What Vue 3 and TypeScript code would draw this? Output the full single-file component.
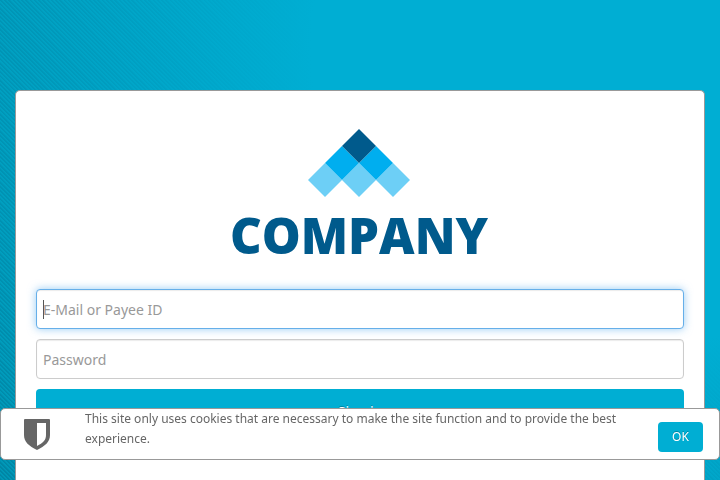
<script setup lang="ts">
import { onMounted, ref } from 'vue'

const account = ref('')
const password = ref('')
const noticeOpen = ref(true)
const accountField = ref<HTMLInputElement | null>(null)

onMounted(() => accountField.value?.focus())
</script>

<template>
  <div class="page">
    <main class="card">
      <div class="brand">
        <svg class="mark" viewBox="0 0 102 68" aria-hidden="true">
          <path fill="#6dcff6" d="M17 34l17 17-17 17L0 51zM51 34l17 17-17 17-17-17zM85 34l17 17-17 17-17-17z" />
          <path fill="#00aeef" d="M34 17l17 17-17 17-17-17zM68 17l17 17-17 17-17-17z" />
          <path fill="#005a8c" d="M51 0l17 17-17 17-17-17z" />
        </svg>
        <span class="name">COMPANY</span>
      </div>
      <form class="form" @submit.prevent>
        <input ref="accountField" v-model="account" class="field" type="text" aria-label="E-Mail or Payee ID" placeholder="E-Mail or Payee ID" />
        <input v-model="password" class="field" type="password" aria-label="Password" placeholder="Password" />
        <button class="button submit" type="submit">Sign in</button>
      </form>
    </main>
    <aside v-if="noticeOpen" class="notice">
      <svg class="shield" viewBox="0 0 26 31" aria-hidden="true">
        <path fill="#666" fill-rule="evenodd" d="M1 0h24q1 0 1 1v15c0 7-5 11-13 15C5 27 0 23 0 16V1q0-1 1-1zM13 4v23c6-3 9-6 9-11V4z" />
      </svg>
      <p class="message">This site only uses cookies that are necessary to make the site function and to provide the best experience.</p>
      <button class="button accept" type="button" @click="noticeOpen = false">OK</button>
    </aside>
  </div>
</template>

<style>
body {
  margin: 0;
  overflow: hidden;
}
</style>

<style scoped>
.page {
  box-sizing: border-box;
  min-height: 100vh;
  padding: 90px 15px 0;
  display: flex;
  font-family: "Noto Sans", "Open Sans", sans-serif;
  color: #666;
  background:
    radial-gradient(ellipse 130% 170% at 90% 10%, #00aed3 36%, rgba(0, 174, 211, 0) 100%),
    repeating-linear-gradient(45deg, #007b98 0 1px, #0092b0 2px 3px);
}

.card {
  box-sizing: border-box;
  flex: 1;
  padding: 38px 20px 20px;
  border: 1px solid #999;
  border-bottom: 0;
  border-radius: 5px 5px 0 0;
  background: #fff;
}

.brand {
  display: flex;
  flex-direction: column;
  align-items: center;
  height: 160px;
  padding-right: 2px;
}

.mark {
  width: 102px;
  height: 68px;
}

.name {
  margin-top: 8px;
  font: 800 49px/60px "Open Sans", sans-serif;
  color: #005a8c;
}

.form {
  display: flex;
  flex-direction: column;
  gap: 10px;
}

.field {
  box-sizing: border-box;
  width: 100%;
  height: 40px;
  padding: 6px;
  border: 1px solid #ccc;
  border-radius: 4px;
  outline: 0;
  font: 14px/20px "Noto Sans", sans-serif;
  color: #555;
  background: #fff;
  box-shadow: inset 0 1px 1px rgba(0, 0, 0, 0.08);
}

.field::placeholder {
  color: #999;
  opacity: 1;
}

.field:focus {
  border-color: #66afe9;
  box-shadow: inset 0 1px 1px rgba(0, 0, 0, 0.08), 0 0 8px rgba(82, 168, 236, 0.6);
}

/* Steady caret while the focused field is empty */
.field:focus:placeholder-shown {
  caret-color: transparent;
  background: linear-gradient(#555, #555) 6px 10px / 1px 19px no-repeat #fff;
}

.button {
  border: 0;
  border-radius: 4px;
  color: #fff;
  background: #00aed3;
  font: 12px/20px "Noto Sans", sans-serif;
  text-shadow: 0 -1px 0 rgba(0, 0, 0, 0.25);
}

.submit {
  height: 46px;
  font-size: 14px;
}

.notice {
  box-sizing: border-box;
  position: fixed;
  right: 0;
  bottom: 20px;
  left: 0;
  height: 52px;
  padding: 0 16px 0 23px;
  display: flex;
  border: 1px solid #999;
  border-radius: 5px;
  background: #fff;
}

.shield {
  flex: none;
  width: 26px;
  height: 31px;
  margin-top: 10px;
}

.message {
  flex: 1;
  margin: 0 30px 0 35px;
  font-size: 12px;
  line-height: 20px;
}

.accept {
  align-self: flex-start;
  width: 45px;
  height: 30px;
  margin-top: 13px;
}
</style>
